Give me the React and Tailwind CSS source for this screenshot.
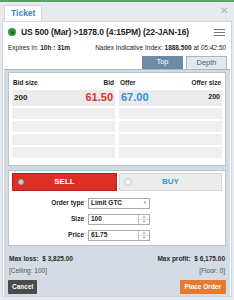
import React from 'react';

const emptyRows = [1, 2, 3, 4];

const Spinner = () => (
  <div className="flex flex-col w-[11px] border-l border-[#c8c8c8] h-full">
    <div className="flex-1 flex items-center justify-center text-[4px] text-[#999] leading-none">▲</div>
    <div className="flex-1 flex items-center justify-center text-[4px] text-[#999] leading-none border-t border-[#ddd]">▼</div>
  </div>
);

export default function App() {
  return (
    <div className="w-[234px] h-[300px] bg-[#e6eaee] border-t-[2px] border-[#5f9e63] font-['Liberation_Sans',Arial,sans-serif] relative overflow-hidden text-[#222]">
      {/* close */}
      <div className="absolute right-[6px] top-[4px] text-[#aab2ba] text-[10px] leading-none">✕</div>

      {/* tab */}
      <div className="flex px-[4px] pt-[3px]">
        <div className="bg-white border border-b-0 border-[#cfd6dd] px-[6px] h-[16px] flex items-center text-[8.5px] font-bold text-[#3b80c4]">
          Ticket
        </div>
      </div>

      {/* main card */}
      <div className="bg-white mx-[2px] border border-[#cfd6dd] h-[276px] flex flex-col">
        {/* title row */}
        <div className="flex items-center px-[5px] pt-[4px]">
          <div className="w-[8px] h-[8px] rounded-full bg-[#2e9a3c] flex items-center justify-center">
            <div className="w-[3px] h-[3px] rounded-full bg-[#1b5e24]" />
          </div>
          <span className="ml-[5px] text-[8.5px] font-bold tracking-[-0.1px] whitespace-nowrap">US 500 (Mar) &gt;1878.0 (4:15PM) (22-JAN-16)</span>
          <div className="ml-auto mr-[1px] flex flex-col gap-[2px]">
            <div className="w-[11px] h-[1px] bg-[#777]" />
            <div className="w-[11px] h-[1px] bg-[#777]" />
            <div className="w-[11px] h-[1px] bg-[#777]" />
          </div>
        </div>

        {/* expiry row */}
        <div className="flex items-center px-[5px] mt-[4px] text-[6.5px] whitespace-nowrap">
          <span>Expires in: <b>10h : 31m</b></span>
          <span className="ml-auto">Nadex Indicative Index: <b>1888.500</b> at <i>05:42:50</i></span>
        </div>

        {/* top / depth tabs */}
        <div className="flex justify-end gap-[3px] pr-[4px] mt-[3px]">
          <div className="w-[41px] h-[13px] bg-[#6f89a8] flex items-center justify-center text-white text-[7.5px]">Top</div>
          <div className="w-[41px] h-[13px] bg-[#e2e8ee] border border-b-0 border-[#a8b6c6] flex items-center justify-center text-[#3f5f80] text-[7.5px]">Depth</div>
        </div>

        {/* blue-gray area */}
        <div className="flex-1 bg-[#d3dbe4] border-t border-[#a8b6c6] mx-[1px] px-[4px] pt-[2px] flex flex-col">
          {/* order book */}
          <div className="bg-white border border-[#b8c4d0] h-[94px] px-[3px] pt-[5px] flex gap-[4px]">
            <div className="flex-1 flex flex-col gap-[2px]">
              <div className="flex justify-between text-[6.5px] font-bold px-[1px] h-[10px]">
                <span>Bid size</span>
                <span>Bid</span>
              </div>
              <div className="bg-[#ebebeb] h-[16px] flex items-center justify-between px-[2px]">
                <span className="text-[8px] font-bold">200</span>
                <span className="text-[11px] font-bold text-[#e0302c]">61.50</span>
              </div>
              {emptyRows.map((r) => (
                <div key={r} className="bg-[#efefef] h-[11px]" />
              ))}
            </div>
            <div className="flex-1 flex flex-col gap-[2px]">
              <div className="flex justify-between text-[6.5px] font-bold px-[1px] h-[10px]">
                <span>Offer</span>
                <span>Offer size</span>
              </div>
              <div className="bg-[#ebebeb] h-[16px] flex items-center justify-between px-[2px]">
                <span className="text-[11px] font-bold text-[#2e8fd8]">67.00</span>
                <span className="text-[7px] font-bold">200</span>
              </div>
              {emptyRows.map((r) => (
                <div key={r} className="bg-[#efefef] h-[11px]" />
              ))}
            </div>
          </div>

          {/* order form */}
          <div className="bg-white border border-[#b8c4d0] mt-[4px] h-[76px] px-[3px] pt-[2px]">
            <div className="flex gap-[2px]">
              <div className="flex-1 h-[18px] bg-[#dc2f26] border border-[#b82018] flex items-center px-[5px]">
                <div className="w-[6px] h-[6px] rounded-full bg-[#c9ced4] border border-[#9aa3ac]" />
                <span className="flex-1 text-center text-white text-[8px] font-bold pr-[6px]">SELL</span>
              </div>
              <div className="flex-1 h-[18px] bg-[#ececec] border border-[#d6d6d6] flex items-center px-[4px]">
                <div className="w-[8px] h-[8px] rounded-full bg-[#f4f4f4] border border-[#c4c4c4]" />
                <span className="flex-1 text-center text-[#2e9be0] text-[8px] font-bold pr-[8px]">BUY</span>
              </div>
            </div>

            <div className="flex flex-col gap-[5px] mt-[7px] text-[6.5px] font-bold">
              <div className="flex items-center h-[11px]">
                <span className="w-[76px] text-right pr-[4px]">Order type</span>
                <div className="w-[62px] h-[11px] border border-[#aaa] flex items-center px-[2px]">
                  <span>Limit GTC</span>
                  <span className="ml-auto text-[4px] text-[#888]">▼</span>
                </div>
              </div>
              <div className="flex items-center h-[11px]">
                <span className="w-[76px] text-right pr-[4px]">Size</span>
                <div className="w-[62px] h-[11px] border border-[#aaa] flex items-center pl-[2px]">
                  <span className="flex-1">100</span>
                  <Spinner />
                </div>
              </div>
              <div className="flex items-center h-[11px]">
                <span className="w-[76px] text-right pr-[4px]">Price</span>
                <div className="w-[62px] h-[11px] border border-[#aaa] flex items-center pl-[2px]">
                  <span className="flex-1">61.75</span>
                  <Spinner />
                </div>
              </div>
            </div>
          </div>

          {/* footer info */}
          <div className="flex justify-between mt-[8px] px-[1px]">
            <div className="flex flex-col">
              <span className="text-[6.5px] font-bold text-[#2a2a2a]">Max loss:&nbsp; $ 3,825.00</span>
              <span className="text-[6.5px] text-[#555] mt-[3px]">[Ceiling: 100]</span>
            </div>
            <div className="flex flex-col items-end">
              <span className="text-[6.5px] font-bold text-[#2a2a2a]">Max profit:&nbsp; $ 6,175.00</span>
              <span className="text-[6.5px] text-[#555] mt-[3px]">[Floor: 0]</span>
            </div>
          </div>

          <div className="flex justify-between mt-[4px]">
            <div className="h-[14px] px-[4px] bg-[#4a4a4a] rounded-[1px] flex items-center text-white text-[6.5px] font-bold">Cancel</div>
            <div className="h-[14px] px-[5px] bg-[#e57a2f] rounded-[1px] flex items-center text-white text-[6.5px] font-bold">Place Order</div>
          </div>
        </div>
      </div>
    </div>
  );
}
